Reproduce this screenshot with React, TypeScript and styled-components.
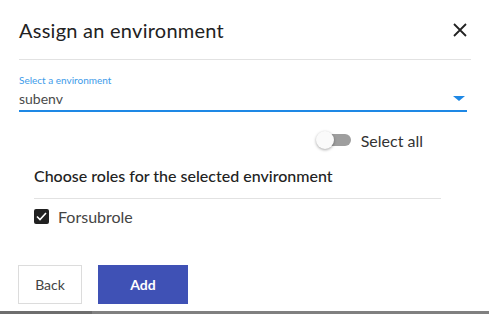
import styled, { createGlobalStyle } from "styled-components";

const GlobalStyle = createGlobalStyle`
    html, body {
        margin: 0;
        padding: 0;
        background: #ffffff;
    }
    body {
        font-family: "Lato", "Noto Sans", sans-serif;
        color: #222;
    }
`

const Dialog = styled.div`
    width: 489px;
    height: 314px;
    display: flex;
    flex-direction: column;
    box-sizing: border-box;
    overflow: hidden;
`

const Header = styled.div`
    display: flex;
    align-items: center;
    justify-content: space-between;
    margin: 0 18px 0 19px;
    height: 59px;
    border-bottom: 1px solid #e2e2e2;
    box-sizing: content-box;
`

const Title = styled.h2`
    margin: 0;
    font-size: 20px;
    font-weight: 400;
    color: #222;
    letter-spacing: 0.25px;
`

const CloseButton = styled.button`
    border: 0;
    background: none;
    padding: 0;
    margin-right: 3px;
    width: 16px;
    height: 16px;
    display: flex;
    align-items: center;
    justify-content: center;
    cursor: pointer;
`

const Body = styled.div`
    flex: 1;
    display: flex;
    flex-direction: column;
    padding: 0 22px 0 19px;
`

const SelectField = styled.div`
    margin-top: 14px;
    width: 448px;
    display: flex;
    flex-direction: column;
    border-bottom: 2px solid #1e88e5;
`

const SelectLabel = styled.label`
    font-size: 10px;
    color: #3d9be9;
    line-height: 12px;
`

const SelectRow = styled.div`
    display: flex;
    align-items: center;
    justify-content: space-between;
    height: 24px;
`

const SelectValue = styled.span`
    font-size: 14px;
    color: #4a4a4a;
`

const Arrow = styled.span`
    width: 0;
    height: 0;
    margin-right: 2px;
    border-left: 6px solid transparent;
    border-right: 6px solid transparent;
    border-top: 5px solid #1e88e5;
`

const ToggleRow = styled.div`
    display: flex;
    justify-content: flex-end;
    align-items: center;
    gap: 10px;
    margin-top: 18px;
    padding-right: 44px;
    height: 20px;
`

const Switch = styled.span`
    position: relative;
    width: 35px;
    height: 14px;
    display: inline-block;
`

const Track = styled.span`
    position: absolute;
    left: 4px;
    right: 0;
    top: 1px;
    height: 12px;
    border-radius: 6px;
    background: #9e9e9e;
`

const Thumb = styled.span`
    position: absolute;
    left: 0;
    top: -2px;
    width: 18px;
    height: 18px;
    border-radius: 50%;
    background: #fafafa;
    box-shadow: 0 1px 3px rgba(0,0,0,.35);
`

const ToggleText = styled.span`
    font-size: 16px;
    color: #333;
`

const Section = styled.div`
    margin: 16px 26px 0 15px;
`

const SectionTitle = styled.h3`
    margin: 0;
    font-size: 16px;
    font-weight: 500;
    color: #222;
    padding-bottom: 13px;
    border-bottom: 1px solid #e2e2e2;
`

const CheckRow = styled.label`
    display: flex;
    align-items: center;
    gap: 9px;
    margin-top: 8px;
    font-size: 16px;
    color: #444;
`

const Box = styled.span<{ checked?: boolean }>`
    width: 15px;
    height: 15px;
    border-radius: 2px;
    background: ${p => p.checked ? "#212121" : "#fff"};
    display: flex;
    align-items: center;
    justify-content: center;
`

const Actions = styled.div`
    margin-top: auto;
    display: flex;
    gap: 16px;
    margin-left: -1px;
    margin-bottom: 7px;
`

const Button = styled.button<{ primary?: boolean }>`
    height: 39px;
    width: ${p => p.primary ? "90px" : "64px"};
    font-family: "Lato", "Noto Sans", sans-serif;
    font-size: 14px;
    font-weight: ${p => p.primary ? 700 : 400};
    color: ${p => p.primary ? "#fff" : "#444"};
    background: ${p => p.primary ? "#3f51b5" : "#fff"};
    border: ${p => p.primary ? "0" : "1px solid #dcdcdc"};
    cursor: pointer;
`

const BottomBar = styled.div`
    height: 3px;
    display: flex;
    background: #808080;
`

const BarThumb = styled.div`
    width: 92px;
    background: #6e6e6e;
`

export default function App() {
    return (
        <Dialog>
            <GlobalStyle />
            <Header>
                <Title>Assign an environment</Title>
                <CloseButton aria-label="close">
                    <svg width="14" height="14" viewBox="0 0 14 14">
                        <path d="M1 1L13 13M13 1L1 13" stroke="#222" strokeWidth="1.8" />
                    </svg>
                </CloseButton>
            </Header>
            <Body>
                <SelectField>
                    <SelectLabel>Select a environment</SelectLabel>
                    <SelectRow>
                        <SelectValue>subenv</SelectValue>
                        <Arrow />
                    </SelectRow>
                </SelectField>
                <ToggleRow>
                    <Switch>
                        <Track />
                        <Thumb />
                    </Switch>
                    <ToggleText>Select all</ToggleText>
                </ToggleRow>
                <Section>
                    <SectionTitle>Choose roles for the selected environment</SectionTitle>
                    <CheckRow>
                        <Box checked>
                            <svg width="11" height="9" viewBox="0 0 11 9">
                                <path d="M1 4.5L4 7.5L10 1" stroke="#fff" strokeWidth="1.6" fill="none" />
                            </svg>
                        </Box>
                        Forsubrole
                    </CheckRow>
                </Section>
                <Actions>
                    <Button>Back</Button>
                    <Button primary>Add</Button>
                </Actions>
            </Body>
            <BottomBar>
                <BarThumb />
            </BottomBar>
        </Dialog>
    )
}
